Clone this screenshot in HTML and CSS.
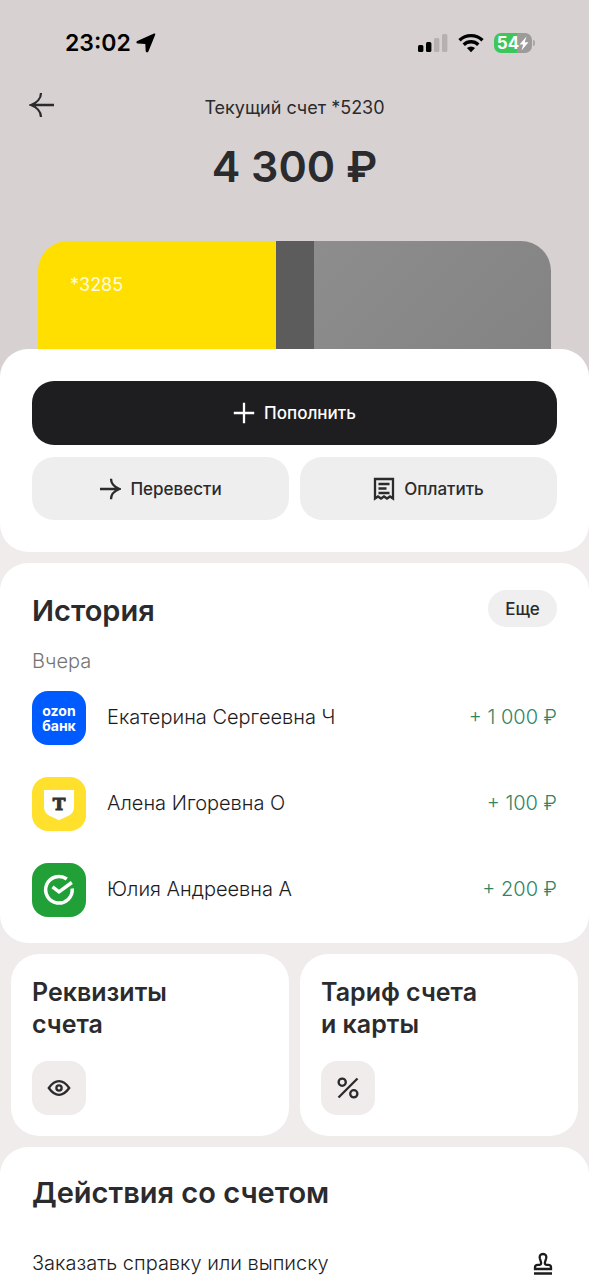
FILE: index.html
```html
<!DOCTYPE html>
<html lang="ru">
<head>
<meta charset="utf-8">
<meta name="viewport" content="width=device-width, initial-scale=1">
<title>Текущий счет</title>
<link rel="stylesheet" href="styles.css">
</head>
<body>
<header class="hero">
  <div class="status">
    <div class="status-time">
      <span>23:02</span>
      <svg width="20" height="20" viewBox="0 0 20 20" aria-hidden="true"><path d="M19.200 1.700 12.400 18.600c-.5 1.200-2.600 1-2.700-.5L9.300 11 1.700 10.600C.2 10.500 0 8.600 1.300 8.100L18 .6c.9-.3 1.500.2 1.200 1.100z"/></svg>
    </div>
    <div class="status-icons">
      <svg width="30" height="20" viewBox="0 0 30 20" aria-hidden="true"><rect x="0" y="12" width="5.400" height="7" rx="1.500"/><rect x="8" y="9" width="5.400" height="10" rx="1.500"/><g fill="#b5b1b1"><rect x="16" y="5" width="5.400" height="14" rx="1.500"/><rect x="24" y="1" width="5.400" height="18" rx="1.500"/></g></svg>
      <svg width="26" height="20" viewBox="0 0 26 20" aria-hidden="true"><g fill="none" stroke="#000" stroke-width="3.300"><path d="M1.500 7.300a16.500 16.500 0 0 1 23 0"/><path d="M5.700 11.700a10.500 10.500 0 0 1 14.600 0"/></g><path d="M13 19.200 8.900 15a6 6 0 0 1 8.200 0z"/></svg>
      <div class="battery">
        <span class="battery-body">54<svg width="10" height="15" viewBox="0 0 10 15" aria-hidden="true"><path fill="#fff" d="M7.500.5.500 8.500h3.700L2.500 14.500l7-8.200H5.700z"/></svg></span>
        <span class="battery-tip"></span>
      </div>
    </div>
  </div>
  <div class="topbar">
    <button class="back" type="button" aria-label="Назад">
      <svg width="26" height="26" viewBox="0 0 26 26" aria-hidden="true"><path d="M25 13H2M12 1C12 6.500 7.500 11 2 13 7.500 15 12 19.500 12 25"/></svg>
    </button>
    <p class="account">Текущий счет *5230</p>
  </div>
  <h1 class="balance">4 300 ₽</h1>
  <div class="bank-card"><span class="bank-card-number">*3285</span><span class="bank-card-stripe"></span><span class="bank-card-rest"></span></div>
</header>
<main class="content">
  <section class="sheet actions">
    <button class="btn btn-primary" type="button">
      <svg width="22" height="22" viewBox="0 0 22 22" aria-hidden="true"><path d="M11 .8v20.400M.8 11h20.400"/></svg>Пополнить
    </button>
    <div class="btn-row">
      <button class="btn" type="button">
        <svg width="22" height="22" viewBox="0 0 22 22" aria-hidden="true"><path d="M1 11h19M12 .8C12 5.500 16 9.300 20.500 11 16 12.700 12 16.500 12 21.200"/></svg>Перевести
      </button>
      <button class="btn" type="button">
        <svg width="22" height="24" viewBox="0 0 22 24" aria-hidden="true"><path d="M2 21.500V2h18v19.500l-3-2-3 2-3-2-3 2-3-2zM5.500 7h11M5.500 11.500h8M5.500 16h11"/></svg>Оплатить
      </button>
    </div>
  </section>

  <section class="sheet history">
    <div class="history-head">
      <h2 class="title">История</h2>
      <button class="more" type="button">Еще</button>
    </div>
    <p class="day">Вчера</p>
    <ul class="operations">
      <li class="operation">
        <span class="logo logo-ozon"><span>ozon</span><span>банк</span></span>
        <span class="name">Екатерина Сергеевна Ч</span>
        <span class="amount">+ 1 000 ₽</span>
      </li>
      <li class="operation">
        <span class="logo logo-t"><svg width="54" height="54" viewBox="0 0 54 54" aria-hidden="true"><path fill="#fff" d="M12 13h30v16c0 5-1.500 7.500-5.500 9.800L27 43.300l-9.500-4.500C13.500 36.500 12 34 12 29z"/><text class="logo-letter" x="27" y="33" text-anchor="middle">T</text></svg></span>
        <span class="name">Алена Игоревна О</span>
        <span class="amount">+ 100 ₽</span>
      </li>
      <li class="operation">
        <span class="logo logo-sber"><svg width="54" height="54" viewBox="0 0 54 54" aria-hidden="true"><g fill="none" stroke="#fff" stroke-width="3.500"><path d="M34.800 16A13.300 13.300 0 1 0 40.200 25.500"/><path d="M20.500 23.800l6.500 5L39.800 19.500"/></g></svg></span>
        <span class="name">Юлия Андреевна А</span>
        <span class="amount">+ 200 ₽</span>
      </li>
    </ul>
  </section>

  <div class="tiles">
    <a class="tile" href="#details">
      <h3 class="tile-title">Реквизиты<br>счета</h3>
      <span class="tile-icon"><svg width="24" height="24" viewBox="0 0 24 24" aria-hidden="true"><path d="M1.800 12C5 7.500 8 5.200 12 5.200S19 7.500 22.200 12C19 16.500 16 18.800 12 18.800S5 16.500 1.800 12z"/><circle cx="12" cy="12" r="2.600"/></svg></span>
    </a>
    <a class="tile" href="#tariff">
      <h3 class="tile-title">Тариф счета<br>и карты</h3>
      <span class="tile-icon"><svg width="24" height="24" viewBox="0 0 24 24" aria-hidden="true"><path d="M21.500 2.500 2.500 21.500"/><circle cx="6.200" cy="6.200" r="3.600"/><circle cx="17.800" cy="17.800" r="3.600"/></svg></span>
    </a>
  </div>

  <section class="sheet account-actions">
    <h2 class="title">Действия со счетом</h2>
    <a class="action" href="#statement">
      <span>Заказать справку или выписку</span>
      <svg width="26" height="24" viewBox="0 0 26 24" aria-hidden="true"><path d="M4 18v-1.700c0-1.800 1-2.500 2.800-2.500h1.700c1.600 0 1.800-1 1.500-2.500L8.900 7.500C8.200 4.500 9.500 3 12 3s3.800 1.500 3.100 4.500L14 11.300c-.3 1.500-.1 2.500 1.500 2.500h1.700c1.800 0 2.800.7 2.800 2.500V18zM3 22.500h18"/></svg>
    </a>
  </section>
</main>
</body>
</html>
```
FILE: styles.css
```css
* {
  box-sizing: border-box;
}

body {
  margin: 0;
  min-height: 100vh;
  background: #efeceb;
  color: #2b2b2d;
  font-family: Inter, "Noto Sans", sans-serif;
  font-size: 20px;
  line-height: 24px;
}

h1, h2, h3, p, ul {
  margin: 0;
  padding: 0;
}

button {
  border: 0;
  padding: 0;
  color: inherit;
  font: inherit;
  cursor: pointer;
}

a {
  color: inherit;
  text-decoration: none;
}

svg {
  display: block;
  flex: none;
}

.hero {
  padding-top: 29px;
  background: #d7d2d1;
}

.status {
  display: flex;
  justify-content: space-between;
  align-items: center;
  padding: 0 54px 0 65px;
  color: #000;
}

.status-time {
  display: flex;
  align-items: center;
  gap: 5px;
  font-size: 23px;
  font-weight: 600;
  line-height: 28px;
}

.status-icons {
  display: flex;
  align-items: center;
  gap: 10px;
}

.battery {
  display: flex;
  align-items: center;
  gap: 1px;
}

.battery-body {
  display: flex;
  align-items: center;
  justify-content: center;
  width: 38px;
  height: 20px;
  border-radius: 7px;
  background: linear-gradient(90deg, #3ec65d 60%, #9d9a9a 60%);
  color: #fff;
  font-size: 17px;
  font-weight: 700;
  line-height: 20px;
}

.battery-tip {
  width: 2px;
  height: 6px;
  border-radius: 0 2px 2px 0;
  background: #aaa6a6;
}

.topbar {
  display: grid;
  grid-template-columns: 26px 1fr 26px;
  align-items: center;
  padding: 32px 29px 0;
}

.back {
  height: 30px;
  background: none;
}

.back path,
.btn path,
.tile-icon path,
.tile-icon circle,
.action path {
  fill: none;
  stroke: currentColor;
  stroke-width: 2.3;
}

.account {
  padding-top: 7px;
  text-align: center;
  font-size: 18px;
}

.balance {
  margin-top: 18px;
  text-align: center;
  font-size: 43px;
  font-weight: 600;
  line-height: 56px;
}

.bank-card {
  display: grid;
  grid-template-columns: 238fr 38fr 237fr;
  height: 144px;
  margin: 47px 38px 0;
  overflow: hidden;
  border-radius: 30px 30px 0 0;
}

.bank-card-number {
  padding: 32px;
  background: #fedf00;
  color: #fffbe0;
  font-size: 18px;
}

.bank-card-stripe {
  background: #5c5c5c;
}

.bank-card-rest {
  background: linear-gradient(135deg, #8d8d8d, #828282);
}

.content {
  display: flex;
  flex-direction: column;
  gap: 11px;
  margin-top: -36px;
}

.sheet {
  border-radius: 28px;
  background: #fff;
}

.actions {
  display: grid;
  gap: 12px;
  padding: 32px;
}

.btn-row {
  display: grid;
  grid-template-columns: 1fr 1fr;
  gap: 11px;
}

.btn {
  display: flex;
  align-items: center;
  justify-content: center;
  gap: 9px;
  height: 63px;
  border-radius: 22px;
  background: #eeeeee;
  font-size: 17px;
  font-weight: 500;
}

.btn-primary {
  height: 64px;
  background: #1e1e20;
  color: #fff;
}

.history {
  padding: 27px 32px 26px;
}

.history-head {
  display: flex;
  align-items: flex-start;
  justify-content: space-between;
}

.title {
  padding-top: 1px;
  font-size: 29px;
  font-weight: 600;
  line-height: 40px;
}

.more {
  width: 69px;
  height: 37px;
  border-radius: 19px;
  background: #efefef;
  font-size: 17px;
  font-weight: 500;
}

.day {
  margin-top: 18px;
  color: #757575;
  font-weight: 300;
}

.operations {
  display: grid;
  gap: 32px;
  margin-top: 18px;
  list-style: none;
}

.operation {
  display: flex;
  align-items: center;
}

.logo {
  display: flex;
  flex-direction: column;
  align-items: center;
  justify-content: center;
  width: 54px;
  height: 54px;
  border-radius: 16px;
}

.logo-ozon {
  background: #005bff;
  color: #fff;
  font-size: 14px;
  font-weight: 700;
  line-height: 15px;
}

.logo-t {
  background: #fee02d;
}

.logo-letter {
  fill: #333;
  stroke: #333;
  stroke-width: 1;
  font-family: "DejaVu Serif", serif;
  font-size: 17px;
  font-weight: 700;
}

.logo-sber {
  background: #21a038;
}

.name {
  flex: 1;
  padding: 0 0 2px 21px;
  color: #1c1c1e;
  font-weight: 300;
}

.amount {
  padding-bottom: 2px;
  color: #2f8565;
  font-weight: 300;
}

.tiles {
  display: grid;
  grid-template-columns: 1fr 1fr;
  gap: 11px;
  padding: 0 11px;
}

.tile {
  padding: 22px 21px 21px;
  border-radius: 28px;
  background: #fff;
}

.tile-title {
  font-size: 25px;
  font-weight: 600;
  line-height: 32px;
}

.tile-icon {
  display: flex;
  align-items: center;
  justify-content: center;
  width: 54px;
  height: 54px;
  margin-top: 21px;
  border-radius: 16px;
  background: #efeceb;
}

.account-actions {
  padding: 25px 32px 5px;
  border-radius: 28px 28px 0 0;
}

.action {
  display: flex;
  align-items: center;
  justify-content: space-between;
  margin-top: 38px;
  color: #1c1c1e;
  font-weight: 300;
}
```
